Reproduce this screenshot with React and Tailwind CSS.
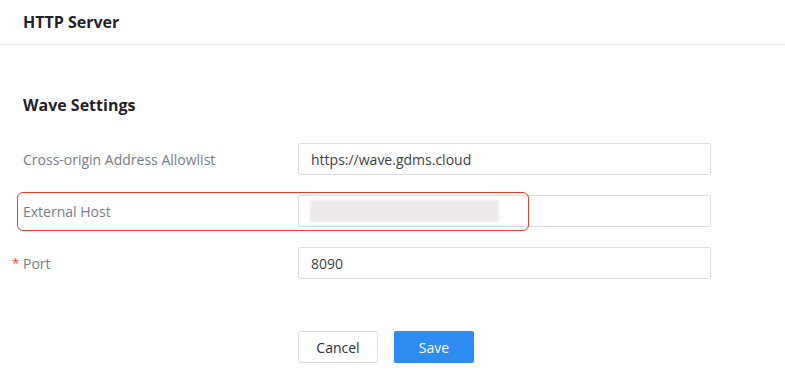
import React from "react";

const Field = ({ label, required, children }) => (
  <div className="flex items-center h-8">
    <div className="w-[275px] shrink-0 relative text-[14px] text-[#777d88]">
      {required && (
        <span className="absolute -left-[11px] top-[1px] text-[#e8472f] text-[13px]">*</span>
      )}
      {label}
    </div>
    {children}
  </div>
);

const Input = ({ children }) => (
  <div className="w-[413px] h-8 border border-[#dcdee2] rounded-[2px] bg-white flex items-center px-3 text-[14px] text-[#3c3f45]">
    {children}
  </div>
);

export default function App() {
  return (
    <div
      className="relative w-[785px] h-[374px] bg-white overflow-hidden"
      style={{ fontFamily: '"Open Sans", "Noto Sans", sans-serif' }}
    >
      <div className="h-[45px] border-b border-[#e8eaec] flex items-center px-[23px]">
        <h1 className="text-[16px] font-bold text-[#1f2329]">HTTP Server</h1>
      </div>
      <div className="px-[23px]">
        <h2 className="mt-[48px] text-[16px] font-bold text-[#1f2329] leading-6">Wave Settings</h2>
        <div className="mt-[26px] flex flex-col gap-5">
          <Field label="Cross-origin Address Allowlist">
            <Input>https://wave.gdms.cloud</Input>
          </Field>
          <Field label="External Host">
            <Input>
              <div className="w-[189px] h-[22px] -ml-[1px] bg-[#eeeaea] blur-[1px] rounded-[1px]" />
            </Input>
          </Field>
          <Field label="Port" required>
            <Input>8090</Input>
          </Field>
        </div>
        <div className="mt-[52px] pl-[275px] flex gap-4">
          <button className="w-20 h-8 border border-[#dcdee2] rounded-[2px] bg-white text-[14px] text-[#2b2f36]">
            Cancel
          </button>
          <button className="w-20 h-8 rounded-[2px] bg-[#2d8cf0] text-[14px] text-white">
            Save
          </button>
        </div>
      </div>
      <div className="absolute left-[17px] top-[192px] w-[512px] h-[39px] border border-[#e5402b] rounded-[6px] pointer-events-none" />
    </div>
  );
}
